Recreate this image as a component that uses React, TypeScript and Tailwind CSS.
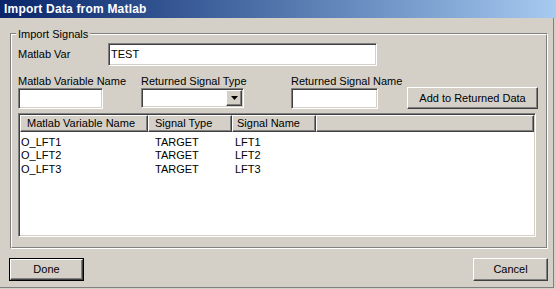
import React from "react";

const sunken =
  "border border-t-[#808080] border-l-[#808080] border-r-white border-b-white shadow-[inset_1px_1px_0_#404040,inset_-1px_-1px_0_#d4d0c8]";
const raised =
  "border border-t-white border-l-white border-r-[#404040] border-b-[#404040] shadow-[inset_-1px_-1px_0_#808080]";

const rows = [
  ["O_LFT1", "TARGET", "LFT1"],
  ["O_LFT2", "TARGET", "LFT2"],
  ["O_LFT3", "TARGET", "LFT3"],
];

export default function App() {
  return (
    <div className="w-[556px] h-[289px] bg-[#d4d0c8] flex flex-col overflow-hidden font-['Liberation_Sans',Arial,sans-serif] text-[11px] leading-[13px] text-black">
      <div className="h-[18px] shrink-0 bg-gradient-to-r from-[#0a246a] to-[#a6caf0] pl-[4px] text-white font-bold text-[12px] leading-[18px] tracking-[0.2px]">
        Import Data from Matlab
      </div>
      <div className="flex-1 mr-[2px] mb-[1px] border-r border-b border-[#808080] pl-[9px] pr-[5px] pt-[15px] flex flex-col">
        {/* Group box */}
        <div className="relative ml-[1px] w-[538px] h-[216px] border border-t-[#808080] border-l-[#808080] border-r-white border-b-white">
          <div className="absolute left-[5px] top-[-6px] px-[2px] bg-[#d4d0c8] leading-[13px]">
            Import Signals
          </div>
          <div className="h-full border border-t-white border-l-white border-r-[#808080] border-b-[#808080] pl-[6px] pt-[8px] flex flex-col">
            {/* Row 1 */}
            <div className="flex items-center h-[23px]">
              <div className="w-[90px]">Matlab Var</div>
              <div className={`${sunken} bg-white w-[269px] h-[23px] flex items-center pl-[2px]`}>
                TEST
              </div>
            </div>
            {/* Row 2 */}
            <div className="flex items-start mt-[9px]">
              <div className="w-[123px] flex flex-col">
                <div className="h-[13px] whitespace-nowrap">Matlab Variable Name</div>
                <div className={`${sunken} bg-white w-[85px] h-[21px]`} />
              </div>
              <div className="w-[150px] flex flex-col">
                <div className="h-[13px] whitespace-nowrap">Returned Signal Type</div>
                <div className={`${sunken} bg-white w-[103px] h-[20px] flex justify-end p-[1px]`}>
                  <div className={`${raised} bg-[#d4d0c8] w-[16px] h-full flex items-center justify-center`}>
                    <svg width="7" height="4" viewBox="0 0 7 4">
                      <path d="M0 0h7L3.5 4z" fill="#000" />
                    </svg>
                  </div>
                </div>
              </div>
              <div className="w-[116px] flex flex-col">
                <div className="h-[13px] whitespace-nowrap">Returned Signal Name</div>
                <div className={`${sunken} bg-white w-[87px] h-[21px]`} />
              </div>
              <div className={`${raised} mt-[12px] w-[131px] h-[22px] flex items-center justify-center`}>
                Add to Returned Data
              </div>
            </div>
            {/* List view */}
            <div className={`${sunken} bg-white mt-[4px] w-[518px] h-[124px] p-[1px] flex flex-col`}>
              <div className="h-[17px] flex bg-[#d4d0c8]">
                <div className={`${raised} w-[128px] pl-[6px] flex items-center whitespace-nowrap`}>
                  Matlab Variable Name
                </div>
                <div className={`${raised} w-[84px] pl-[6px] flex items-center whitespace-nowrap`}>
                  Signal Type
                </div>
                <div className={`${raised} w-[84px] pl-[4px] flex items-center whitespace-nowrap`}>
                  Signal Name
                </div>
                <div className={`${raised} flex-1`} />
              </div>
              <div className="pt-[4px] pl-[1px] flex flex-col">
                {rows.map((r) => (
                  <div key={r[0]} className="flex h-[13.4px] leading-[13px]">
                    <div className="w-[134px]">{r[0]}</div>
                    <div className="w-[80px]">{r[1]}</div>
                    <div>{r[2]}</div>
                  </div>
                ))}
              </div>
            </div>
          </div>
        </div>
        {/* Buttons */}
        <div className="flex justify-between mt-[9px]">
          <div className="border border-black w-[75px] h-[23px]">
            <div className={`${raised} w-full h-full flex items-center justify-center`}>Done</div>
          </div>
          <div className={`${raised} w-[75px] h-[23px] flex items-center justify-center`}>Cancel</div>
        </div>
      </div>
    </div>
  );
}
